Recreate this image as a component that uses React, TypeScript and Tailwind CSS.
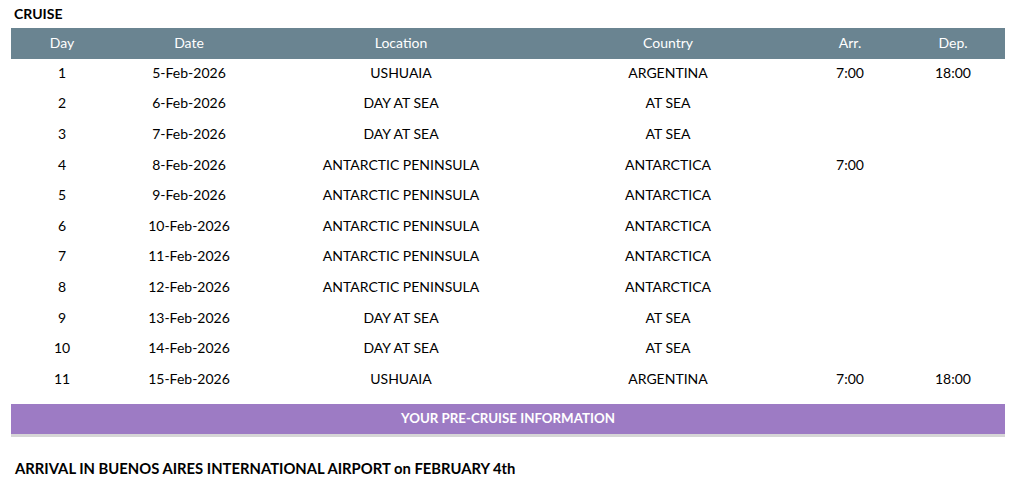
const rows: [string, string, string, string, string, string][] = [
  ["1", "5-Feb-2026", "USHUAIA", "ARGENTINA", "7:00", "18:00"],
  ["2", "6-Feb-2026", "DAY AT SEA", "AT SEA", "", ""],
  ["3", "7-Feb-2026", "DAY AT SEA", "AT SEA", "", ""],
  ["4", "8-Feb-2026", "ANTARCTIC PENINSULA", "ANTARCTICA", "7:00", ""],
  ["5", "9-Feb-2026", "ANTARCTIC PENINSULA", "ANTARCTICA", "", ""],
  ["6", "10-Feb-2026", "ANTARCTIC PENINSULA", "ANTARCTICA", "", ""],
  ["7", "11-Feb-2026", "ANTARCTIC PENINSULA", "ANTARCTICA", "", ""],
  ["8", "12-Feb-2026", "ANTARCTIC PENINSULA", "ANTARCTICA", "", ""],
  ["9", "13-Feb-2026", "DAY AT SEA", "AT SEA", "", ""],
  ["10", "14-Feb-2026", "DAY AT SEA", "AT SEA", "", ""],
  ["11", "15-Feb-2026", "USHUAIA", "ARGENTINA", "7:00", "18:00"],
];

const COLS = "grid grid-cols-[102px_152px_272px_262px_102px_104px]";

export default function App() {
  return (
    <div className="w-[1018px] h-[484px] bg-white text-[14px] text-black font-['Lato','Open_Sans',sans-serif] overflow-hidden">
      <div className="pl-[14px] h-[26px] flex items-center font-bold">CRUISE</div>

      <div className="ml-[11px] w-[994px] mt-[2px]">
        {/* header */}
        <div className={`${COLS} h-[31px] pb-[2px] bg-[#6a8491] text-white items-center text-center`}>
          <div>Day</div>
          <div>Date</div>
          <div>Location</div>
          <div>Country</div>
          <div>Arr.</div>
          <div>Dep.</div>
        </div>

        {/* rows */}
        <div className="-mt-[1px]">
          {rows.map((r) => (
            <div key={r[0]} className={`${COLS} h-[30.6px] pb-[2px] items-center text-center`}>
              {r.map((c, i) => (
                <div key={i}>{c}</div>
              ))}
            </div>
          ))}
        </div>

        <div className="mt-[9px] h-[33px] bg-[#9d7bc4] border-b-[3px] border-[#d6d6d6] flex items-center justify-center text-white text-[13.3px] font-bold">
          YOUR PRE-CRUISE INFORMATION
        </div>
      </div>

      <div className="pl-[15px] mt-[20px] text-[14.8px] font-bold">
        ARRIVAL IN BUENOS AIRES INTERNATIONAL AIRPORT on FEBRUARY 4th
      </div>
    </div>
  );
}
